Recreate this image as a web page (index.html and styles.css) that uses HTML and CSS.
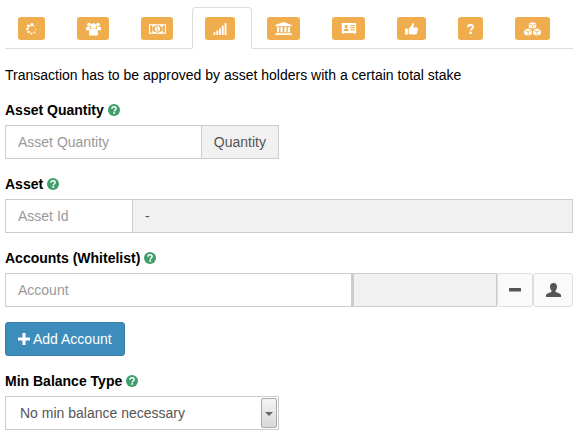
FILE: index.html
```html
<!DOCTYPE html>
<html lang="en">
<head>
<meta charset="utf-8">
<title>Transaction</title>
<link rel="stylesheet" href="styles.css">
</head>
<body>
<svg class="defs" width="0" height="0" aria-hidden="true">
  <symbol id="help" viewBox="0 0 12 12">
    <circle cx="6" cy="6" r="6" fill="#3f9e6c"/>
    <path d="M3.900 4.700C4 3.400 4.900 2.800 6 2.800c1.200 0 2.100.7 2.100 1.700 0 1.500-1.900 1.500-1.900 2.900" fill="none" stroke="#fff" stroke-width="1.500"/>
    <rect x="5.300" y="8.200" width="1.800" height="1.600" fill="#fff"/>
  </symbol>
</svg>
<ul class="tabs">
  <li class="tab"><span class="badge badge-27"><svg width="11" height="12" viewBox="0 0 13 14" fill="#fff"><circle cx="7" cy="2" r="2"/><circle cx="3" cy="3.500" r="1.800"/><circle cx="1.600" cy="7" r="1.600"/><circle cx="3" cy="10.500" r="1.400"/><circle cx="6.500" cy="12.300" r="1.200"/><circle cx="10" cy="11" r="1"/><circle cx="11.700" cy="7.500" r=".8"/><circle cx="10.500" cy="4" r=".6"/></svg></span></li>
  <li class="tab"><span class="badge badge-32"><svg width="15" height="14" viewBox="0 0 17 15" fill="#fff"><circle cx="3.500" cy="2.500" r="2.200"/><circle cx="13.500" cy="2.500" r="2.200"/><path d="M0 9V6.500C0 5.500 1 5 2 5h3L4 9Z"/><path d="M17 9V6.500C17 5.500 16 5 15 5h-3l1 4Z"/><circle cx="8.500" cy="4" r="3"/><path d="M3.500 15V10c0-2 1.500-3 3-3h4c1.500 0 3 1 3 3v5Z"/></svg></span></li>
  <li class="tab"><span class="badge badge-32"><svg width="17" height="10" viewBox="0 0 23 13"><rect width="23" height="13" fill="#fff"/><ellipse cx="11.500" cy="6.500" rx="7" ry="5" fill="#f0ad4e"/><rect x="1.500" y="1.500" width="3" height="10" fill="#f0ad4e"/><rect x="18.500" y="1.500" width="3" height="10" fill="#f0ad4e"/><circle cx="11.500" cy="6.500" r="3.600" fill="#fff"/><path d="M10.500 4.500h1.500v4h1v.8h-3v-.8h1V5.500h-.8Z" fill="#f0ad4e"/></svg></span></li>
  <li class="tab tab-active"><span class="badge badge-30"><svg width="14" height="12" viewBox="0 0 14 13" fill="#fff"><rect y="10" width="2" height="3"/><rect x="3" y="8" width="2" height="5"/><rect x="6" y="6" width="2" height="7"/><rect x="9" y="3" width="2" height="10"/><rect x="12" width="2" height="13"/></svg></span></li>
  <li class="tab"><span class="badge badge-33"><svg width="17" height="13" viewBox="0 0 19 15" fill="#fff"><path d="M9.500 0 19 3.500V5H0V3.500Z"/><rect x="2" y="6" width="2.500" height="6"/><rect x="6" y="6" width="2.500" height="6"/><rect x="10.500" y="6" width="2.500" height="6"/><rect x="14.500" y="6" width="2.500" height="6"/><rect x="0" y="13" width="19" height="2"/></svg></span></li>
  <li class="tab"><span class="badge badge-33"><svg width="16" height="11" viewBox="0 0 17 13"><rect width="17" height="12" fill="#fff"/><rect x="1" y="12" width="1.500" height="1" fill="#fff"/><rect x="14.500" y="12" width="1.500" height="1" fill="#fff"/><circle cx="5" cy="4" r="1.800" fill="#f0ad4e"/><path d="M1.800 9.500C2 7.500 3 6.500 5 6.500s3 1 3.200 3Z" fill="#f0ad4e"/><rect x="10" y="2.500" width="5.500" height="1.200" fill="#f0ad4e"/><rect x="10" y="5" width="5.500" height="1.200" fill="#f0ad4e"/><rect x="10" y="7.500" width="5.500" height="1.200" fill="#f0ad4e"/></svg></span></li>
  <li class="tab"><span class="badge badge-29"><svg width="13" height="12" viewBox="0 0 14 13" fill="#fff"><path d="M0 6h3v6.500H0Z"/><path d="M4 6 7.200 2.500 8 0c1.500 0 1.800 1.500 1.300 3l-.5 2h4.200c1.300 0 1.300 1.800.6 2.300.5.700.2 1.500-.3 1.900.3.700 0 1.400-.6 1.700.2.900-.3 1.600-1.200 1.600H6.500c-1 0-1.500-.5-2.500-.5Z"/></svg></span></li>
  <li class="tab"><span class="badge badge-25"><svg width="7" height="10" viewBox="0 0 9 13"><path d="M1.200 4.200C1.300 2.200 2.700 1.300 4.500 1.300c1.900 0 3.300 1 3.300 2.700C7.800 6.300 5 6.200 5 8.500" fill="none" stroke="#fff" stroke-width="2.400"/><rect x="3" y="10" width="3.200" height="3" fill="#fff"/></svg></span></li>
  <li class="tab"><span class="badge badge-35"><svg width="17" height="14" viewBox="0 0 18 15" fill="#fff"><path d="m9 0 4 1.500V6l-4 1.500L5 6V1.500Z"/><path d="m4.300 7 4 1.500V13l-4 1.800L0 13V8.500Z"/><path d="m13.700 7 4.300 1.500V13l-4.300 1.800-4-1.800V8.500Z"/><path d="M5 2 9 3.500 13 2M9 3.500v4M.4 8.900l3.900 1.500 4-1.500M4.300 10.400v4.400M9.700 8.900l4 1.500 4-1.500M13.700 10.400v4.400" fill="none" stroke="#f0ad4e" stroke-width=".8"/></svg></span></li>
</ul>

<p class="intro">Transaction has to be approved by asset holders with a certain total stake</p>

<div class="group">
  <label class="label">Asset Quantity <svg class="help"><use href="#help"/></svg></label>
  <div class="row row-half">
    <input class="control grow" placeholder="Asset Quantity">
    <span class="addon addon-qty">Quantity</span>
  </div>
</div>

<div class="group">
  <label class="label">Asset <svg class="help"><use href="#help"/></svg></label>
  <div class="row">
    <input class="control asset-id" placeholder="Asset Id">
    <span class="addon addon-fill">-</span>
  </div>
</div>

<div class="group">
  <label class="label">Accounts (Whitelist) <svg class="help"><use href="#help"/></svg></label>
  <div class="row">
    <input class="control grow" placeholder="Account">
    <span class="addon addon-name"></span>
    <button class="btn btn-minus" type="button" aria-label="Remove"><svg width="12" height="4" viewBox="0 0 12 4"><rect width="12" height="3.500" rx=".5" fill="#555"/></svg></button>
    <button class="btn btn-user" type="button" aria-label="Contact"><svg width="15" height="14" viewBox="0 0 15 14"><path d="M7.500 0c2.300 0 3.500 1.600 3.500 3.800 0 1.600-.7 3-1.400 3.800V9c1.500.9 5.100 1.200 5.400 3v2H0v-2c.3-1.800 3.900-2.100 5.400-3V7.600C4.700 6.800 4 5.400 4 3.800 4 1.600 5.200 0 7.500 0Z" fill="#555"/></svg></button>
  </div>
</div>

<button class="btn-add" type="button"><svg width="12" height="12" viewBox="0 0 12 12"><path d="M4.500 0h3v4.500H12v3H7.500V12h-3V7.500H0v-3h4.500Z" fill="#fff"/></svg>Add Account</button>

<div class="group">
  <label class="label">Min Balance Type <svg class="help"><use href="#help"/></svg></label>
  <div class="row row-half select">
    <span class="select-text">No min balance necessary</span>
    <span class="select-arrow"></span>
  </div>
</div>
</body>
</html>
```

FILE: styles.css
```css
* { box-sizing: border-box; }
html, body { margin: 0; }
body {
  width: 580px;
  height: 442px;
  padding: 0 7px 0 5px;
  overflow: hidden;
  background: #fff;
  color: #000;
  font: 14px/20px "Liberation Sans", Arial, sans-serif;
}
.defs { position: absolute; }
.tabs {
  display: flex;
  height: 49px;
  margin: 0;
  padding: 7px 0 0;
  list-style: none;
  border-bottom: 1px solid #ddd;
}
.tab {
  height: 42px;
  margin-right: 2px;
  padding: 9px 16px 0 12px;
  border: 1px solid transparent;
  border-radius: 4px 4px 0 0;
}
.tab-active {
  border-color: #ddd;
  border-bottom-color: #fff;
  background: #fff;
}
.badge {
  display: flex;
  align-items: center;
  justify-content: center;
  height: 23px;
  border-radius: 3px;
  background: #f0ad4e;
}
.badge-25 { width: 25px; }
.badge-27 { width: 27px; }
.badge-29 { width: 29px; }
.badge-30 { width: 30px; }
.badge-32 { width: 32px; }
.badge-33 { width: 33px; }
.badge-35 { width: 35px; }
.intro { margin: 16px 0 0; height: 20px; }
.group { margin-top: 15px; }
.label {
  display: block;
  height: 20px;
  margin-bottom: 5px;
  font-weight: 700;
}
.help { width: 12px; height: 12px; vertical-align: -1px; }
.row { display: flex; height: 34px; }
.row-half { width: 274px; }
.control {
  height: 34px;
  padding: 6px 12px;
  border: 1px solid #ccc;
  border-radius: 0;
  outline: 0;
  font: inherit;
  color: #555;
}
.control::placeholder { color: #999; opacity: 1; }
.grow { flex: 1 1 0; min-width: 0; }
.asset-id { flex: 0 0 128px; width: 128px; }
.addon {
  display: flex;
  align-items: center;
  height: 34px;
  padding: 0 12px;
  border: 1px solid #ccc;
  border-left: 0;
  background: #f1f1f1;
  color: #555;
}
.addon-qty { flex: 0 0 77px; }
.addon-fill { flex: 1 1 0; }
.addon-name { flex: 0 0 145px; border-left: 2px solid #ccc; }
.btn {
  display: flex;
  align-items: center;
  justify-content: center;
  height: 34px;
  padding: 0;
  border: 1px solid #ddd;
  border-radius: 3px;
  background: #fafafa;
}
.btn-minus { flex: 0 0 36px; }
.btn-user { flex: 0 0 40px; }
.btn-add {
  display: flex;
  align-items: center;
  gap: 3px;
  width: 120px;
  height: 34px;
  margin-top: 15px;
  padding: 0 12px;
  border: 1px solid #367fa9;
  border-radius: 3px;
  background: #3c8dbc;
  color: #fff;
  font: inherit;
  white-space: nowrap;
}
.select {
  align-items: center;
  justify-content: space-between;
  padding: 0 1px 0 14px;
  border: 1px solid #ccc;
  color: #555;
}
.select-arrow {
  position: relative;
  width: 16px;
  height: 30px;
  border: 1px solid #aaa;
  border-radius: 2px;
  background: linear-gradient(#f4f4f4, #d8d8d8);
}
.select-arrow::after {
  content: "";
  position: absolute;
  top: 13px;
  left: 3px;
  border: 4px solid transparent;
  border-top-color: #666;
  border-bottom: 0;
}
```
